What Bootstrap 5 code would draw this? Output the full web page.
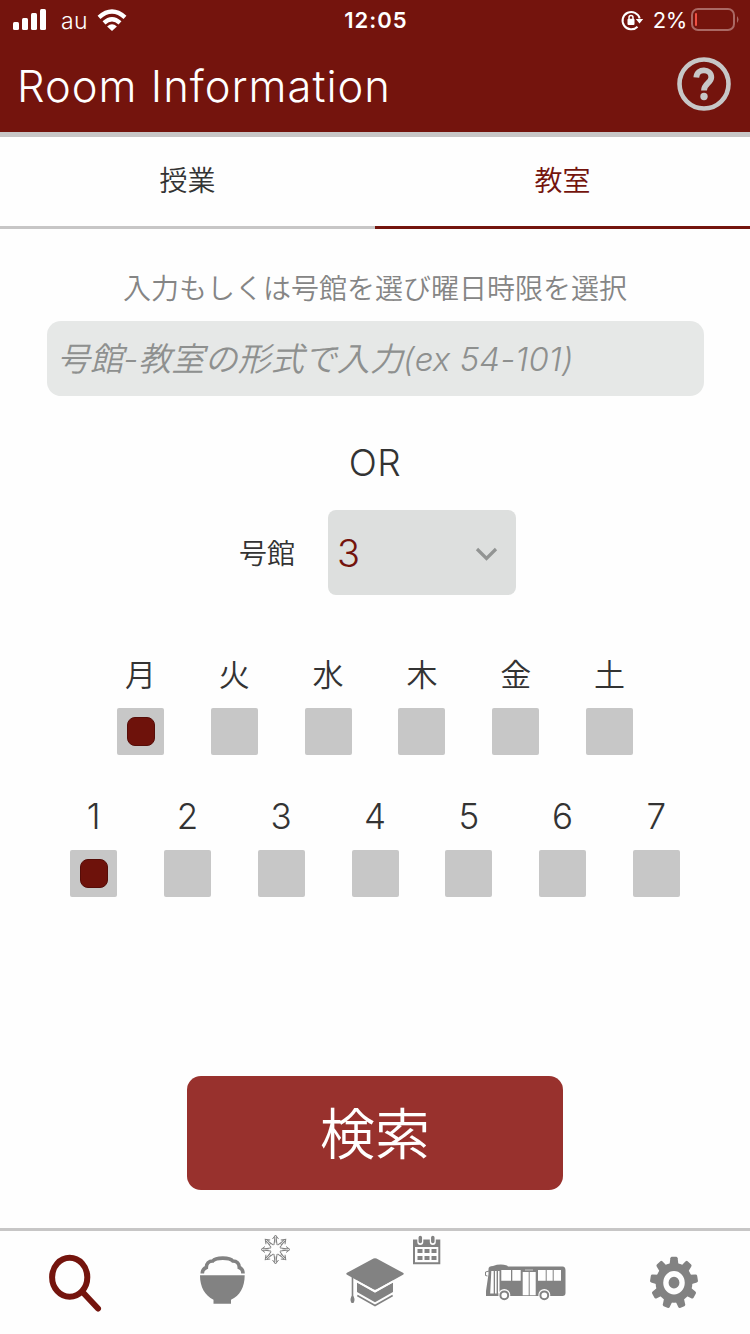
<!DOCTYPE html>
<html lang="ja">
<head>
<meta charset="utf-8">
<meta name="viewport" content="width=device-width, initial-scale=1">
<title>Room Information</title>
<link href="https://cdn.jsdelivr.net/npm/bootstrap@5.3.0/dist/css/bootstrap.min.css" rel="stylesheet">
<style>
:root { --wine:#74140d; --line:#c7c6c6; --ink:#333; }
body { width:750px; height:1334px; overflow:hidden; background:#fefefe; color:var(--ink);
  font-family:Inter,"Noto Sans CJK JP",sans-serif; font-weight:350; }
svg { display:block; flex:none; }
.app-head { height:137px; background:var(--wine); border-bottom:5px solid var(--line); color:#fff; }
.status { height:40px; padding:0 11px 0 13px; font-size:23px; }
.status > div { flex:1 1 0; }
.status .clock { font-weight:600; font-size:22px; letter-spacing:1px; padding-top:1px; }
.title { font-size:43.5px; line-height:60px; font-weight:300; margin:0; padding-top:4px; letter-spacing:1px; }
.tabs { height:92px; }
.tabs a { font-size:28px; line-height:85px; padding-top:2px; height:92px; color:var(--ink); border-bottom:3px solid var(--line); text-decoration:none; }
.tabs a.active { color:var(--wine); border-color:var(--wine); }
.hint { margin-top:39px; font-size:28px; line-height:42px; color:#858585; }
.room { height:75px; margin:11px 46px 0 47px; width:657px; background:#e6e8e7 !important; border:0; border-radius:14px;
  padding:1px 10px 0; font-size:33px; font-weight:350; font-style:italic; letter-spacing:.1px; }
.room::placeholder { color:#8e908f; }
.or { margin-top:36px; font-size:37px; line-height:62px; height:60px; letter-spacing:.5px; }
.pick { margin-top:18px; height:85px; padding-left:239px; }
.pick label { width:89px; font-size:28px; padding-top:3px; }
.drop { width:188px; height:85px; border-radius:8px; background:#dddfde; color:var(--wine); font-size:38px; padding:2px 18px 0 9px; }
.slots { gap:46.8px; }
.slot { width:47px; }
.slot span { line-height:52px; white-space:nowrap; }
.days { margin-top:54px; } .days span { font-size:31px; height:59px; }
.hours { margin-top:35px; } .hours span { font-size:35px; height:60px; line-height:53px; }
.tick { appearance:none; width:47px; height:47px; background:#c7c7c7; border-radius:2px; margin:0; display:grid; place-items:center; }
.tick:checked::after { content:""; width:28px; height:29px; border-radius:8px; background:#6e120b; border:1px solid #560d08; }
.go { width:376px; height:114px; margin:179px auto 0; background:#98312d; color:#fff; border:0; border-radius:14px; font-size:55px; font-weight:350; padding:2px 0 0; }
.dock { margin-top:38px; height:106px; border-top:3px solid var(--line); fill:#828282; }
</style>
</head>
<body class="d-flex flex-column">
<header class="app-head flex-shrink-0">
  <div class="status d-flex align-items-center">
    <div class="d-flex align-items-center">
      <svg width="34" height="40" fill="#fff"><rect y="22" width="6" height="8" rx="1.5"/><rect x="9" y="18" width="6" height="12" rx="1.5"/><rect x="18" y="13" width="6" height="17" rx="1.5"/><rect x="27" y="9" width="6" height="21" rx="1.5"/></svg>
      <span style="margin-left:14px;letter-spacing:.3px;padding-top:2px">au</span>
      <svg class="ms-2" width="32" height="40" viewBox="0 0 32 40" fill="none" stroke="#fff" stroke-width="4.300"><path d="M3 17.400Q16 5.800 29 17.400M8 22.800Q16 15.500 24 22.800"/><path d="M16 31l-4.900-4.600q4.900-4.200 9.800 0z" fill="#fff" stroke="none"/></svg>
    </div>
    <div class="clock text-center">12:05</div>
    <div class="d-flex align-items-center justify-content-end">
      <svg width="24" height="40" viewBox="0 0 24 40" fill="none" stroke="#fff" stroke-width="2"><path d="M17.500 26.700A8.700 8.700 0 1 1 19.700 18.500"/><path d="M15.800 19h7.400l-3.700 4.500z" fill="#fff" stroke="none"/><rect x="7.500" y="18.800" width="7" height="6.200" rx="1" fill="#fff" stroke="none"/><path d="M9 19v-1.500a2 2 0 0 1 4 0V19" stroke-width="1.500"/></svg>
      <span style="margin:0 4px 0 9px;padding-top:1px;font-weight:400;font-size:22px;letter-spacing:-.4px">2%</span>
      <svg width="48" height="40" viewBox="0 0 48 40"><rect x="1" y="9" width="42" height="21" rx="6" fill="none" stroke="#aa6964" stroke-width="2"/><path d="M46 16q3 3.500 0 7z" fill="#aa6964"/><rect x="4" y="13" width="2" height="13" rx="1" fill="#f05043"/></svg>
    </div>
  </div>
  <div class="d-flex justify-content-between align-items-center" style="height:92px;padding:0 19px 4px 17px">
    <h1 class="title">Room Information</h1>
    <svg width="54" height="54" viewBox="0 0 54 54" fill="none" stroke="#c7c7c7"><circle cx="27" cy="27" r="24.500" stroke-width="4.600"/><path d="M19.300 20.500C20 10.500 34.300 11.500 34.300 20.300C34.300 26 27 26.500 27 33.500" stroke-width="5.800"/><circle cx="27" cy="39.500" r="3.700" fill="#c7c7c7" stroke="none"/></svg>
  </div>
</header>
<nav class="tabs d-flex text-center flex-shrink-0"><a class="w-50" href="#">授業</a><a class="w-50 active" href="#">教室</a></nav>
<main class="flex-shrink-0">
  <div class="hint text-center">入力もしくは号館を選び曜日時限を選択</div>
  <input class="form-control room" placeholder="号館-教室の形式で入力(ex 54-101)">
  <div class="or text-center">OR</div>
  <div class="pick d-flex align-items-center"><label>号館</label>
    <div class="drop d-flex align-items-center justify-content-between"><span>3</span><svg width="23" height="14" viewBox="0 0 23 14" fill="none" stroke="#929493" stroke-width="3.200"><path d="M2 2l9.500 9.500L21 2"/></svg></div>
  </div>
  <div class="slots days d-flex justify-content-center" id="days"></div>
  <div class="slots hours d-flex justify-content-center" id="hours"></div>
  <button class="btn go d-block">検索</button>
</main>
<nav class="dock d-flex flex-shrink-0">
  <svg width="150" height="103" fill="none" stroke="#74140d" stroke-width="6"><ellipse cx="69.700" cy="46.300" rx="17.600" ry="19.500"/><path d="M83 61.500l15 16" stroke-linecap="round"/></svg>
  <svg width="150" height="103"><path d="M50 44.300h44.700c0 12-5 20.500-13.700 24.500v4H63.500v-4C55 64.500 50 56.500 50 44.300z"/><path d="M52.300 42.500c0-3 1.500-5 4-6c0-4 2.500-6.500 6.500-6.500c3-3.800 17-3.800 20 0c4 0 6.500 2.500 6.500 6.500c2.500 1 3.700 3 3.700 6" fill="none" stroke="#828282" stroke-width="3.600"/>
    <g id="flake" transform="translate(125.500 18.500)" fill="none" stroke="#828282" stroke-width="1"></g></svg>
  <svg width="150" height="103"><path d="M47 41.800L73.500 27.600q1.500-.8 3 0L103 41.800q1.500 1 0 2L76.500 58.400q-1.500.8-3 0L47 43.800q-1.500-1 0-2zM57 51.500l18 10.300l18-10.300V61L75 71.300L57 61z"/><path d="M75 60.300l18.500-10M75 60.300L56.500 50.300" stroke="#fefefe" stroke-width="1.800"/><path d="M57.300 64.500L75 74.500l17.700-10M52.500 46v20" fill="none" stroke="#828282" stroke-width="1.600"/><path d="M52.500 64q3.500 4 1 8h-2q-2.500-4 1-8z"/>
    <path fill-rule="evenodd" d="M113 8.500h27.300v24.700H113zM115 16v15.300h23.300V16z"/><path d="M120.300 6v5M132.800 6v5" stroke="#fefefe" stroke-width="6" stroke-linecap="round"/><path d="M120.300 6.500v4M132.800 6.500v4" stroke="#828282" stroke-width="3.500" stroke-linecap="round"/><path d="M117.500 18h5v4h-5zm7 0h5v4h-5zm7 0h5v4h-5zm-14 7h5v4h-5zm7 0h5v4h-5zm7 0h5v4h-5z"/></svg>
  <svg width="150" height="103"><path d="M43 35q7-2.500 14-.5l1 1h54.500q3 0 3 4V62q0 3-3 3H36V60l2.500-17v-5q0-3 4.500-3z"/><g fill="#fefefe"><path d="M41.300 40h2.400v22.500h-3.500zM45 40h1.600v22.500H45zM48 40h1.500v22.500H48zM51.300 39H61v10.700h-9.700zM62.300 39h8.400v10.700h-8.400zM72.700 41h6v23.300h-6zM79.700 41h6v23.300h-6zM88 39h7.700v10.700H88zM96.700 39h6v10.700h-6zM103.700 39h7.300v10.700h-7.300z"/><circle cx="54.300" cy="64" r="6"/><circle cx="94.300" cy="64" r="6"/></g><path d="M75 39h8" stroke="#c8c8c8"/><g fill="#fefefe" stroke="#828282" stroke-width="2"><circle cx="54.300" cy="64.300" r="3.900"/><circle cx="94.300" cy="64.300" r="3.900"/><path d="M39 40l-3.500 1v3.500l2 .5" fill="none" stroke-width="1"/></g></svg>
  <svg width="150" height="103"><g transform="translate(74 51.700) scale(.92 1)"><circle r="20"/><g id="teeth"></g><circle r="8.800" fill="none" stroke="#fefefe" stroke-width="5.800"/></g></svg>
</nav>
<script src="https://cdn.jsdelivr.net/npm/bootstrap@5.3.0/dist/js/bootstrap.bundle.min.js"></script>
<script>
const fill = (id, names) => document.getElementById(id).innerHTML = names.map((n, i) =>
  `<label class="slot d-flex flex-column align-items-center"><span>${n}</span><input type="checkbox" class="tick" ${i ? '' : 'checked'}></label>`).join('');
fill('days', [...'月火水木金土']);
fill('hours', [...'1234567']);
document.getElementById('teeth').innerHTML = Array.from({length: 9}, (_, i) =>
  `<path transform="rotate(${i * 40})" d="M-4.800-18l.8-6.500q.3-1.500 1.500-1.500h5q1.200 0 1.500 1.500l.8 6.500z"/>`).join('');
document.getElementById('flake').innerHTML = Array.from({length: 8}, (_, i) =>
  `<path transform="rotate(${i * 45})" d="M-.8-7V-13M.8-7V-13M-3-10.500L0-14.500L3-10.500M-1.600-4.500L-.8-10M1.600-4.500L.8-10"/>`).join('');
</script>
</body>
</html>
